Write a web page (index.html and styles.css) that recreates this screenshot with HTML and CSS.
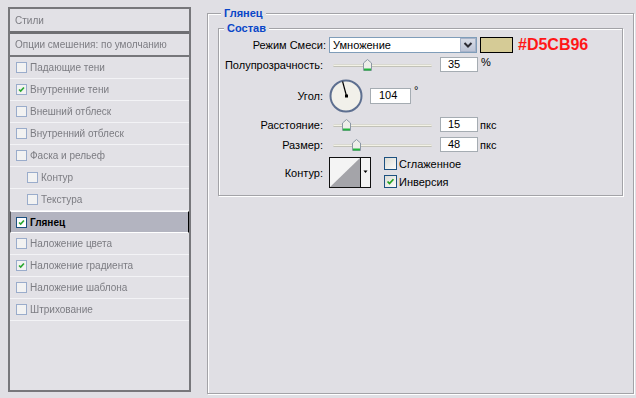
FILE: index.html
```html
<!DOCTYPE html>
<html>
	<head>
		<meta charset="UTF-8">
		<title>Стиль слоя</title>
		<link rel="stylesheet" href="styles.css">
	</head>
	<body>
		<div class="dialog">
			<div class="styles">
				<div class="styles-head">Стили</div>
				<div class="styles-blend">Опции смешения: по умолчанию</div>
				<ul class="effects">
					<li><span class="mini-cb"></span>Падающие тени</li>
					<li><span class="mini-cb on"><svg viewBox="0 0 11 11"><path d="M2.5 5.5 L4.5 7.5 L8.5 3"/></svg></span>Внутренние тени</li>
					<li><span class="mini-cb"></span>Внешний отблеск</li>
					<li><span class="mini-cb"></span>Внутренний отблеск</li>
					<li><span class="mini-cb"></span>Фаска и рельеф</li>
					<li class="sub"><span class="mini-cb"></span>Контур</li>
					<li class="sub"><span class="mini-cb"></span>Текстура</li>
					<li class="active"><span class="mini-cb on"><svg viewBox="0 0 11 11"><path d="M2.5 5.5 L4.5 7.5 L8.5 3"/></svg></span>Глянец</li>
					<li><span class="mini-cb"></span>Наложение цвета</li>
					<li><span class="mini-cb on"><svg viewBox="0 0 11 11"><path d="M2.5 5.5 L4.5 7.5 L8.5 3"/></svg></span>Наложение градиента</li>
					<li><span class="mini-cb"></span>Наложение шаблона</li>
					<li><span class="mini-cb"></span>Штрихование</li>
				</ul>
			</div>

			<fieldset class="group outer">
				<legend>Глянец</legend>
				<fieldset class="group inner">
					<legend>Состав</legend>

					<div class="row r-mode">
						<label class="wide">Режим Смеси:</label>
						<div class="select">
							<span>Умножение</span>
							<span class="drop"><svg viewBox="0 0 14 12"><path d="M3.5 4 L7 7.5 L10.5 4"/></svg></span>
						</div>
						<div class="swatch"></div>
						<span class="hex">#D5CB96</span>
					</div>

					<div class="row r-opacity">
						<label>Полупрозрачность:</label>
						<div class="slider">
							<div class="track"></div>
							<svg class="thumb" style="left: 34px" viewBox="0 0 9 12"><path class="thumb-body" d="M0.5 4 L4.5 0.5 L8.5 4 V11.5 H0.5 Z"/><rect class="thumb-foot" x="1" y="9.5" width="7" height="2"/></svg>
						</div>
						<div class="field">35</div>
						<span class="unit">%</span>
					</div>

					<div class="row r-angle">
						<label>Угол:</label>
						<div class="dial">
							<svg viewBox="0 0 34 34">
								<circle class="dial-face" cx="17" cy="17" r="15.5"/>
								<line class="dial-hand" x1="17.5" y1="17" x2="13.6" y2="2.5"/>
								<rect class="dial-pin" x="16" y="15.5" width="3" height="3"/>
							</svg>
						</div>
						<div class="field field-angle">104</div>
						<span class="unit degree">°</span>
					</div>

					<div class="row r-distance">
						<label>Расстояние:</label>
						<div class="slider">
							<div class="track"></div>
							<svg class="thumb" style="left: 13px" viewBox="0 0 9 12"><path class="thumb-body" d="M0.5 4 L4.5 0.5 L8.5 4 V11.5 H0.5 Z"/><rect class="thumb-foot" x="1" y="9.5" width="7" height="2"/></svg>
						</div>
						<div class="field">15</div>
						<span class="unit">пкс</span>
					</div>

					<div class="row r-size">
						<label>Размер:</label>
						<div class="slider">
							<div class="track"></div>
							<svg class="thumb" style="left: 23px" viewBox="0 0 9 12"><path class="thumb-body" d="M0.5 4 L4.5 0.5 L8.5 4 V11.5 H0.5 Z"/><rect class="thumb-foot" x="1" y="9.5" width="7" height="2"/></svg>
						</div>
						<div class="field">48</div>
						<span class="unit">пкс</span>
					</div>

					<div class="row r-contour">
						<label>Контур:</label>
						<div class="contour">
							<svg class="curve" viewBox="0 0 30 29"><path d="M0 29 L30 0 V29 Z"/></svg>
							<span class="contour-drop"><svg viewBox="0 0 11 29"><path d="M3 12 H8 L5.5 15 Z"/></svg></span>
						</div>
						<div class="checks">
							<div class="check"><span class="cb"></span>Сглаженное</div>
							<div class="check"><span class="cb on"><svg viewBox="0 0 13 13"><path d="M3 6.5 L5.3 9 L10 3.8"/></svg></span>Инверсия</div>
						</div>
					</div>
				</fieldset>
			</fieldset>
		</div>
	</body>
</html>
```

FILE: styles.css
```css
* {
	margin: 0;
	padding: 0;
	box-sizing: border-box;
}
body {
	width: 636px;
	height: 398px;
	overflow: hidden;
	background-color: #e0dfe4;
	font-family: "Liberation Sans", Arial, sans-serif;
	font-size: 11px;
	color: #000;
}
.dialog {
	display: flex;
	align-items: flex-start;
}

/* left list of effects */
.styles {
	width: 183px;
	height: 385px;
	margin: 7px 0 0 8px;
	border: 2px solid #77777b;
	background-color: #e2e1e6;
	color: #7c7c82;
	font-size: 10px;
}
.styles-head,
.styles-blend {
	display: flex;
	align-items: center;
	padding-left: 5px;
	filter: blur(0.3px);
}
.styles-head {
	height: 25px;
	border-bottom: 3px solid #6f6f73;
}
.styles-blend {
	height: 23px;
	border-bottom: 2px solid #76767a;
}
.effects {
	list-style: none;
}
.effects li {
	display: flex;
	align-items: center;
	height: 22px;
	padding-left: 6px;
	border-bottom: 1px solid #f3f3f6;
	filter: blur(0.3px);
}
.effects li.sub {
	padding-left: 17px;
}
.effects li.active {
	background-color: #b3b4c0;
	border-top: 1px solid #fff;
	border-bottom: 1px solid #fff;
	border-left: 1px solid #55555a;
	border-right: 1px solid #000;
	padding-left: 5px;
	color: #000;
	font-weight: bold;
	filter: none;
}
.mini-cb {
	display: inline-block;
	width: 11px;
	height: 11px;
	margin-right: 3px;
	border: 1px solid #9aaccb;
	background-color: #f2f2f2;
}
.effects li.active .mini-cb {
	border-color: #1c5180;
	background-color: #fff;
}
.mini-cb svg {
	display: block;
	width: 9px;
	height: 9px;
}
.mini-cb path {
	fill: none;
	stroke: #2aa832;
	stroke-width: 2;
}

/* group boxes */
.group {
	border: 1px solid #a3a3a7;
	box-shadow: inset 1px 1px 0 #fff, 1px 1px 0 #fff;
}
.group legend {
	padding: 0 3px;
	line-height: 13px;
	background-color: #e0dfe4;
	color: #0a46c8;
	font-weight: bold;
	font-size: 11px;
}
.outer {
	width: 427px;
	height: 387px;
	margin: 7px 0 0 16px;
	padding: 0 10px;
}
.outer > legend {
	margin-left: 3px;
}
.inner {
	margin-top: 2px;
	padding: 2px 0 7px 1px;
}
.inner > legend {
	margin-left: 4px;
}

/* rows */
.row {
	display: flex;
	align-items: center;
}
.row label {
	width: 109px;
	padding-right: 6px;
	text-align: right;
}
.row label.wide {
	padding-right: 3px;
}
.r-mode {
	height: 16px;
}
.r-opacity {
	height: 15px;
	margin-top: 4px;
}
.r-angle {
	height: 34px;
	margin-top: 7px;
}
.r-distance {
	height: 15px;
	margin-top: 4px;
}
.r-size {
	height: 15px;
	margin-top: 5px;
}
.r-contour {
	height: 31px;
	margin-top: 5px;
}

/* blend mode */
.select {
	display: flex;
	align-items: center;
	justify-content: space-between;
	width: 148px;
	height: 16px;
	border: 1px solid #7f9db9;
	background-color: #fff;
	padding-left: 3px;
}
.drop {
	width: 16px;
	height: 14px;
	border: 1px solid #a7b3c9;
	background: linear-gradient(#d8dce6, #bcc4d6);
}
.drop svg {
	display: block;
	width: 14px;
	height: 12px;
}
.drop path {
	fill: none;
	stroke: #2b2b33;
	stroke-width: 2;
}
.swatch {
	width: 33px;
	height: 16px;
	margin-left: 3px;
	border: 1px solid #000;
	background-color: #d5cb96;
}
.hex {
	margin-left: 5px;
	color: #ff1717;
	font-weight: bold;
	font-size: 16px;
}

/* sliders */
.slider {
	position: relative;
	width: 111px;
	height: 15px;
}
.track {
	width: 99px;
	height: 3px;
	margin: 7px 0 0 4px;
	border-radius: 2px;
	background-color: #f3f2e6;
	border-bottom: 1px solid #c2c2b8;
	border-top: 1px solid #d8d8d0;
}
.thumb {
	position: absolute;
	top: 2px;
	width: 9px;
	height: 12px;
}
.thumb-body {
	fill: #eeeeea;
	stroke: #8c98a4;
	stroke-width: 1;
}
.thumb-foot {
	fill: #22b43c;
}
.field {
	width: 38px;
	height: 15px;
	padding-left: 7px;
	border: 1px solid #a5acb2;
	background-color: #fff;
	line-height: 13px;
}
.unit {
	margin-left: 2px;
}
.r-opacity .unit {
	margin-left: 3px;
	align-self: flex-start;
	margin-top: -1px;
}

/* angle */
.dial {
	width: 34px;
	height: 34px;
}
.dial svg {
	display: block;
	width: 34px;
	height: 34px;
}
.dial-face {
	fill: #f1f0ea;
	stroke: #5d6f90;
	stroke-width: 2;
}
.dial-hand {
	stroke: #000;
	stroke-width: 1.2;
}
.dial-pin {
	fill: #000;
}
.field-angle {
	width: 41px;
	height: 16px;
	margin-left: 7px;
	padding-left: 8px;
}
.degree {
	align-self: flex-start;
	margin: 5px 0 0 3px;
}

/* contour */
.contour {
	display: flex;
	width: 42px;
	height: 31px;
	border: 1px solid #111;
	background-color: #f4f4f4;
}
.curve {
	display: block;
	width: 30px;
	height: 29px;
}
.curve path {
	fill: #a4a4a9;
}
.contour-drop {
	width: 10px;
	border-left: 1px solid #111;
	background-color: #f4f4f4;
}
.contour-drop svg {
	display: block;
	width: 9px;
	height: 29px;
}
.contour-drop path {
	fill: #000;
}
.checks {
	display: flex;
	flex-direction: column;
	gap: 5px;
	margin-left: 13px;
}
.check {
	display: flex;
	align-items: center;
	height: 13px;
}
.cb {
	width: 13px;
	height: 13px;
	margin-right: 2px;
	border: 1px solid #1c5180;
	background: linear-gradient(135deg, #dcdcd5, #fbfbf9);
}
.cb svg {
	display: block;
	width: 11px;
	height: 11px;
}
.cb path {
	fill: none;
	stroke: #21a121;
	stroke-width: 2;
}
```
